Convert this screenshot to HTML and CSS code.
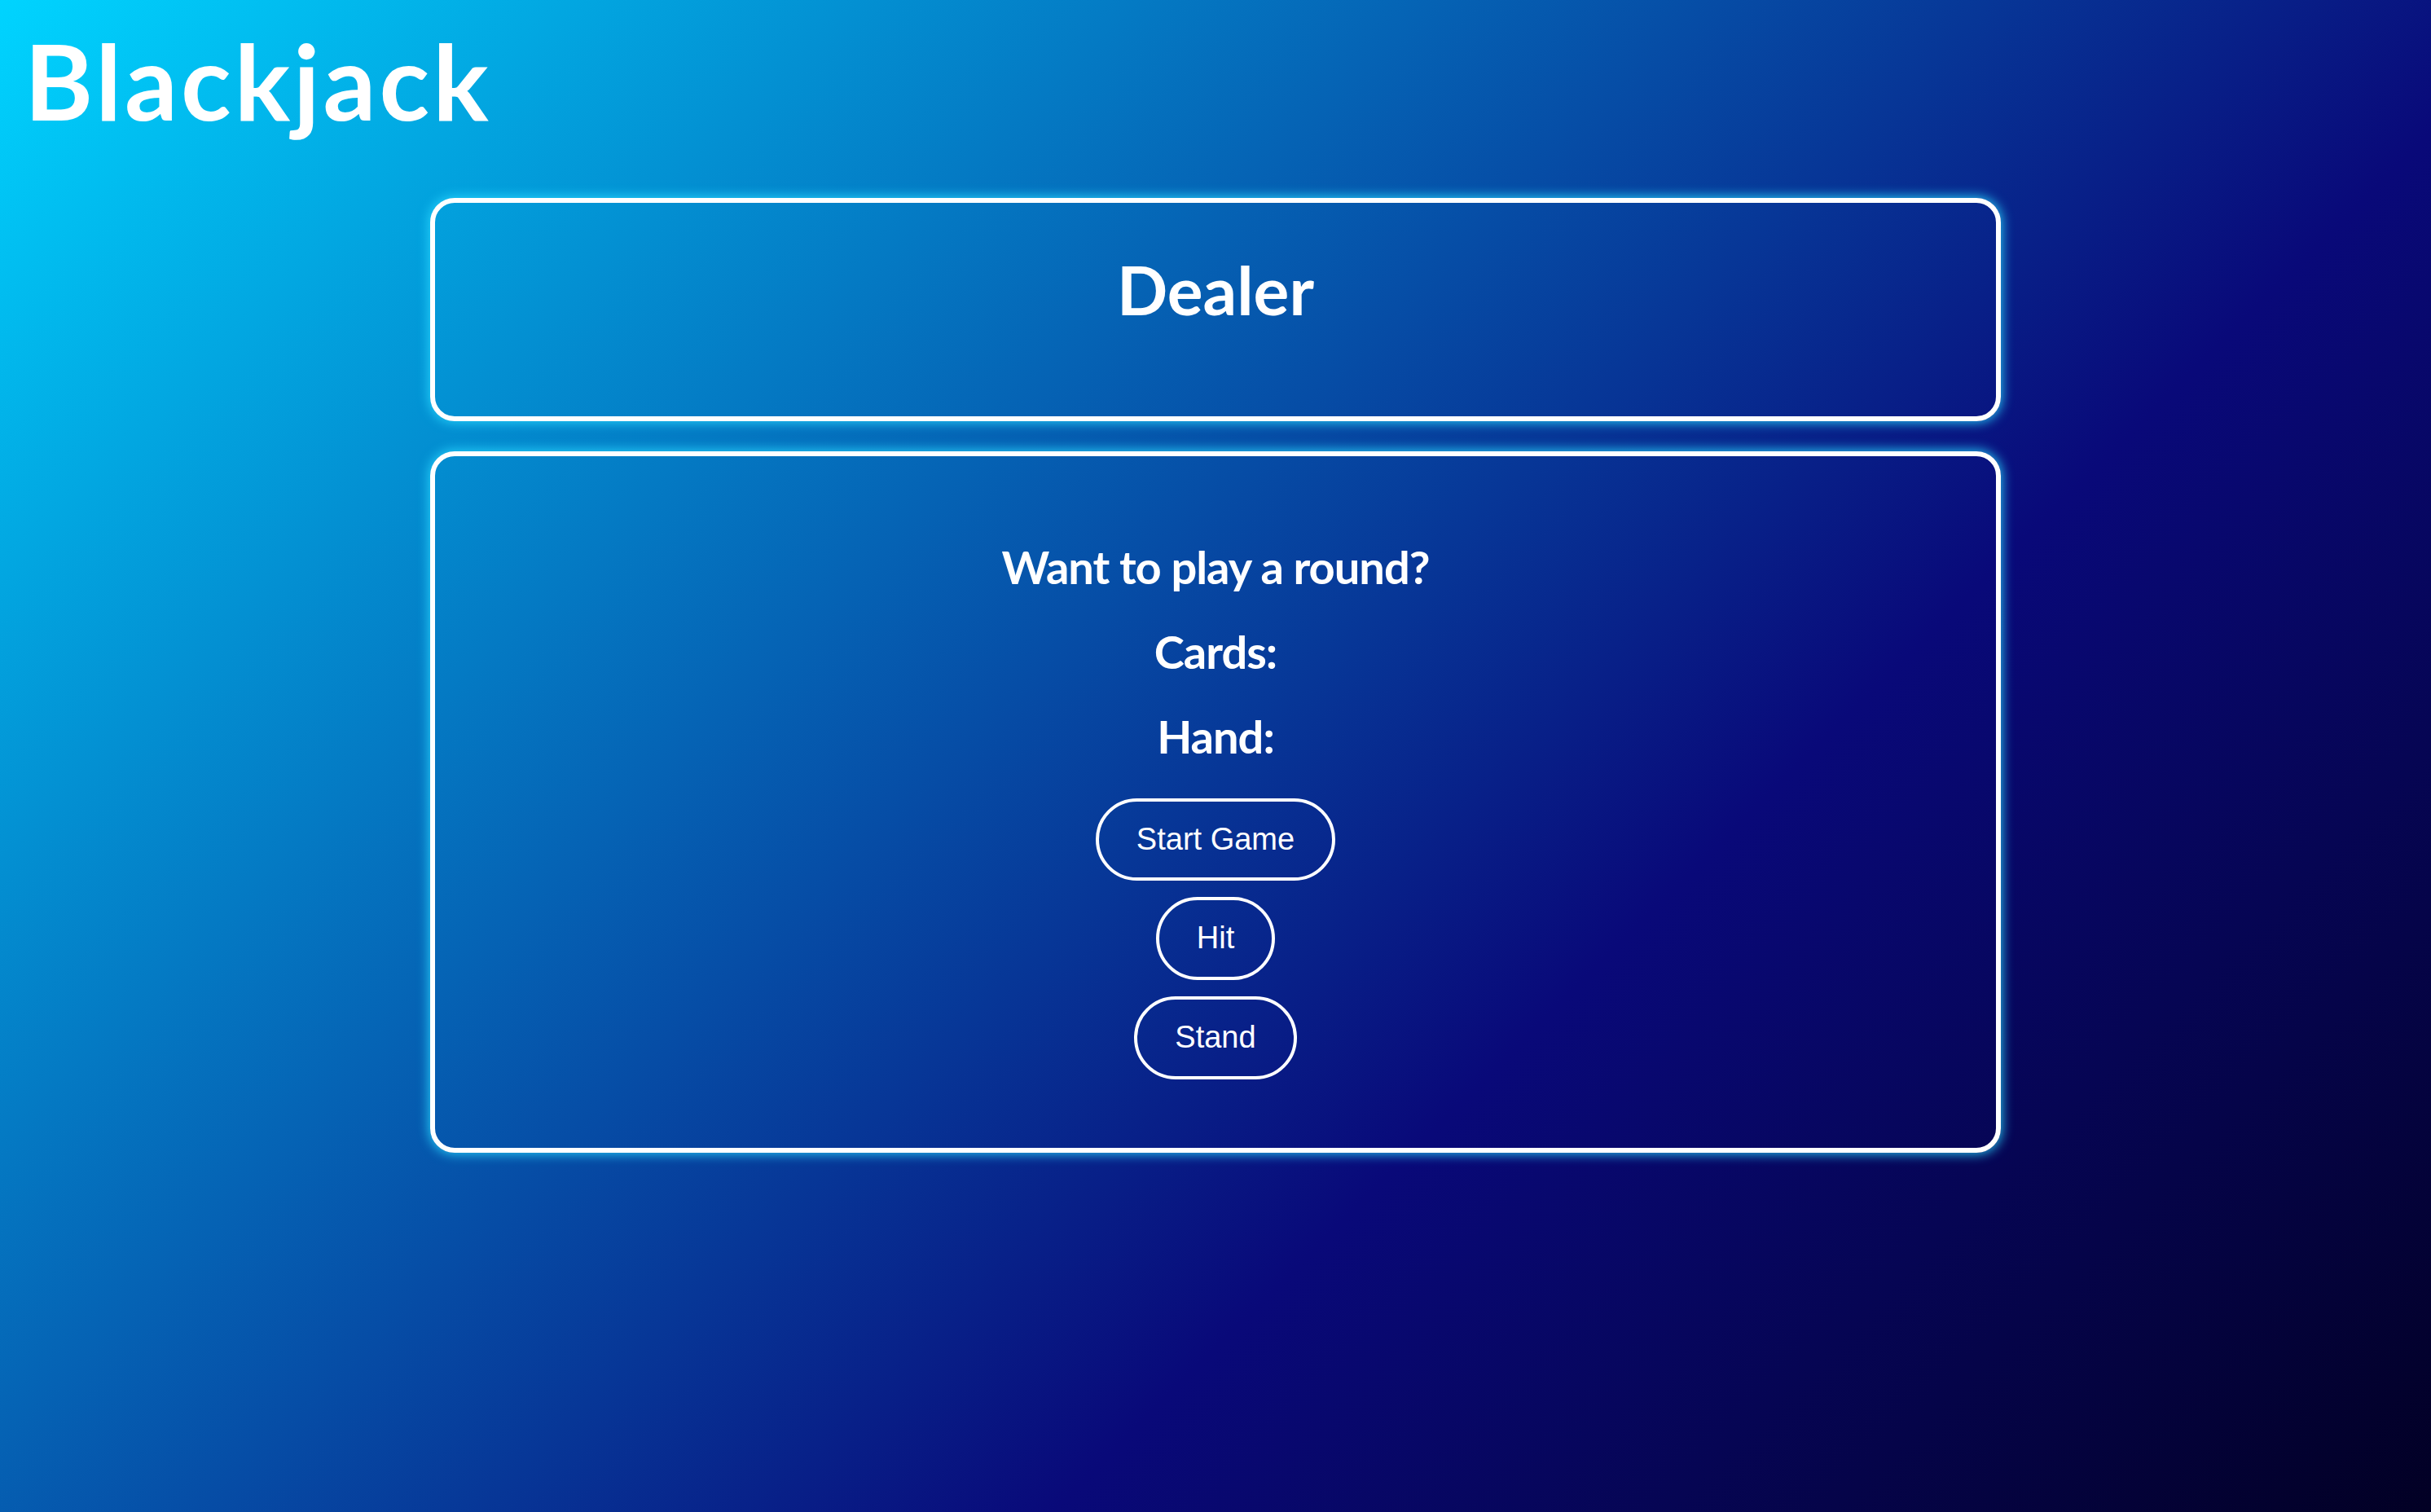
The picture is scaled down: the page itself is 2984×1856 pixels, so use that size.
FILE: index.html
```html
<!DOCTYPE html>
<html lang="en">
<head>
<meta charset="utf-8">
<title>Blackjack</title>
<link rel="stylesheet" href="styles.css">
</head>
<body>
  <h1 class="title">Blackjack</h1>
  <main class="table">
    <section class="panel dealer">
      <h2 class="dealer-title">Dealer</h2>
    </section>
    <section class="panel player">
      <h3 class="line">Want to play a round?</h3>
      <h3 class="line">Cards:</h3>
      <h3 class="line">Hand:</h3>
      <div class="actions">
        <button class="btn">Start Game</button>
        <button class="btn">Hit</button>
        <button class="btn">Stand</button>
      </div>
    </section>
  </main>
</body>
</html>
```

FILE: styles.css
```css
html, body {
  margin: 0;
  padding: 0;
}

body {
  min-height: 100vh;
  background: linear-gradient(135deg, #00d4ff 0%, #090979 65%, #020024 100%);
  color: #ffffff;
  font-family: "Lato", "Open Sans", "DejaVu Sans", sans-serif;
}

.title {
  margin: 22px 0 67px 30px;
  font-size: 128px;
  line-height: 1.2;
  font-weight: 700;
  letter-spacing: 4px;
}

.table {
  width: 1928px;
  margin: 0 auto;
  display: flex;
  flex-direction: column;
  gap: 37px;
}

.panel {
  border: 6px solid #ffffff;
  border-radius: 30px;
  box-shadow: 0 0 14px 2px rgba(40, 215, 255, 0.85);
  display: flex;
  flex-direction: column;
  align-items: center;
}

.dealer {
  padding: 57px 0 107px;
}

.dealer-title {
  margin: 0;
  font-size: 82px;
  line-height: 1.2;
  font-weight: 700;
}

.player {
  padding: 102px 0 84px;
}

.line {
  margin: 0 0 37px;
  font-size: 56px;
  line-height: 1.2;
  font-weight: 700;
  letter-spacing: -1px;
}

.line:nth-of-type(3) {
  margin-bottom: 42px;
}

.actions {
  display: flex;
  flex-direction: column;
  align-items: center;
  gap: 20px;
}

.btn {
  font-family: "Liberation Sans", Arial, sans-serif;
  font-size: 38px;
  line-height: 1.15;
  color: #ffffff;
  background: transparent;
  border: 4px solid #ffffff;
  border-radius: 60px;
  padding: 25px 46px;
  cursor: pointer;
}
```
